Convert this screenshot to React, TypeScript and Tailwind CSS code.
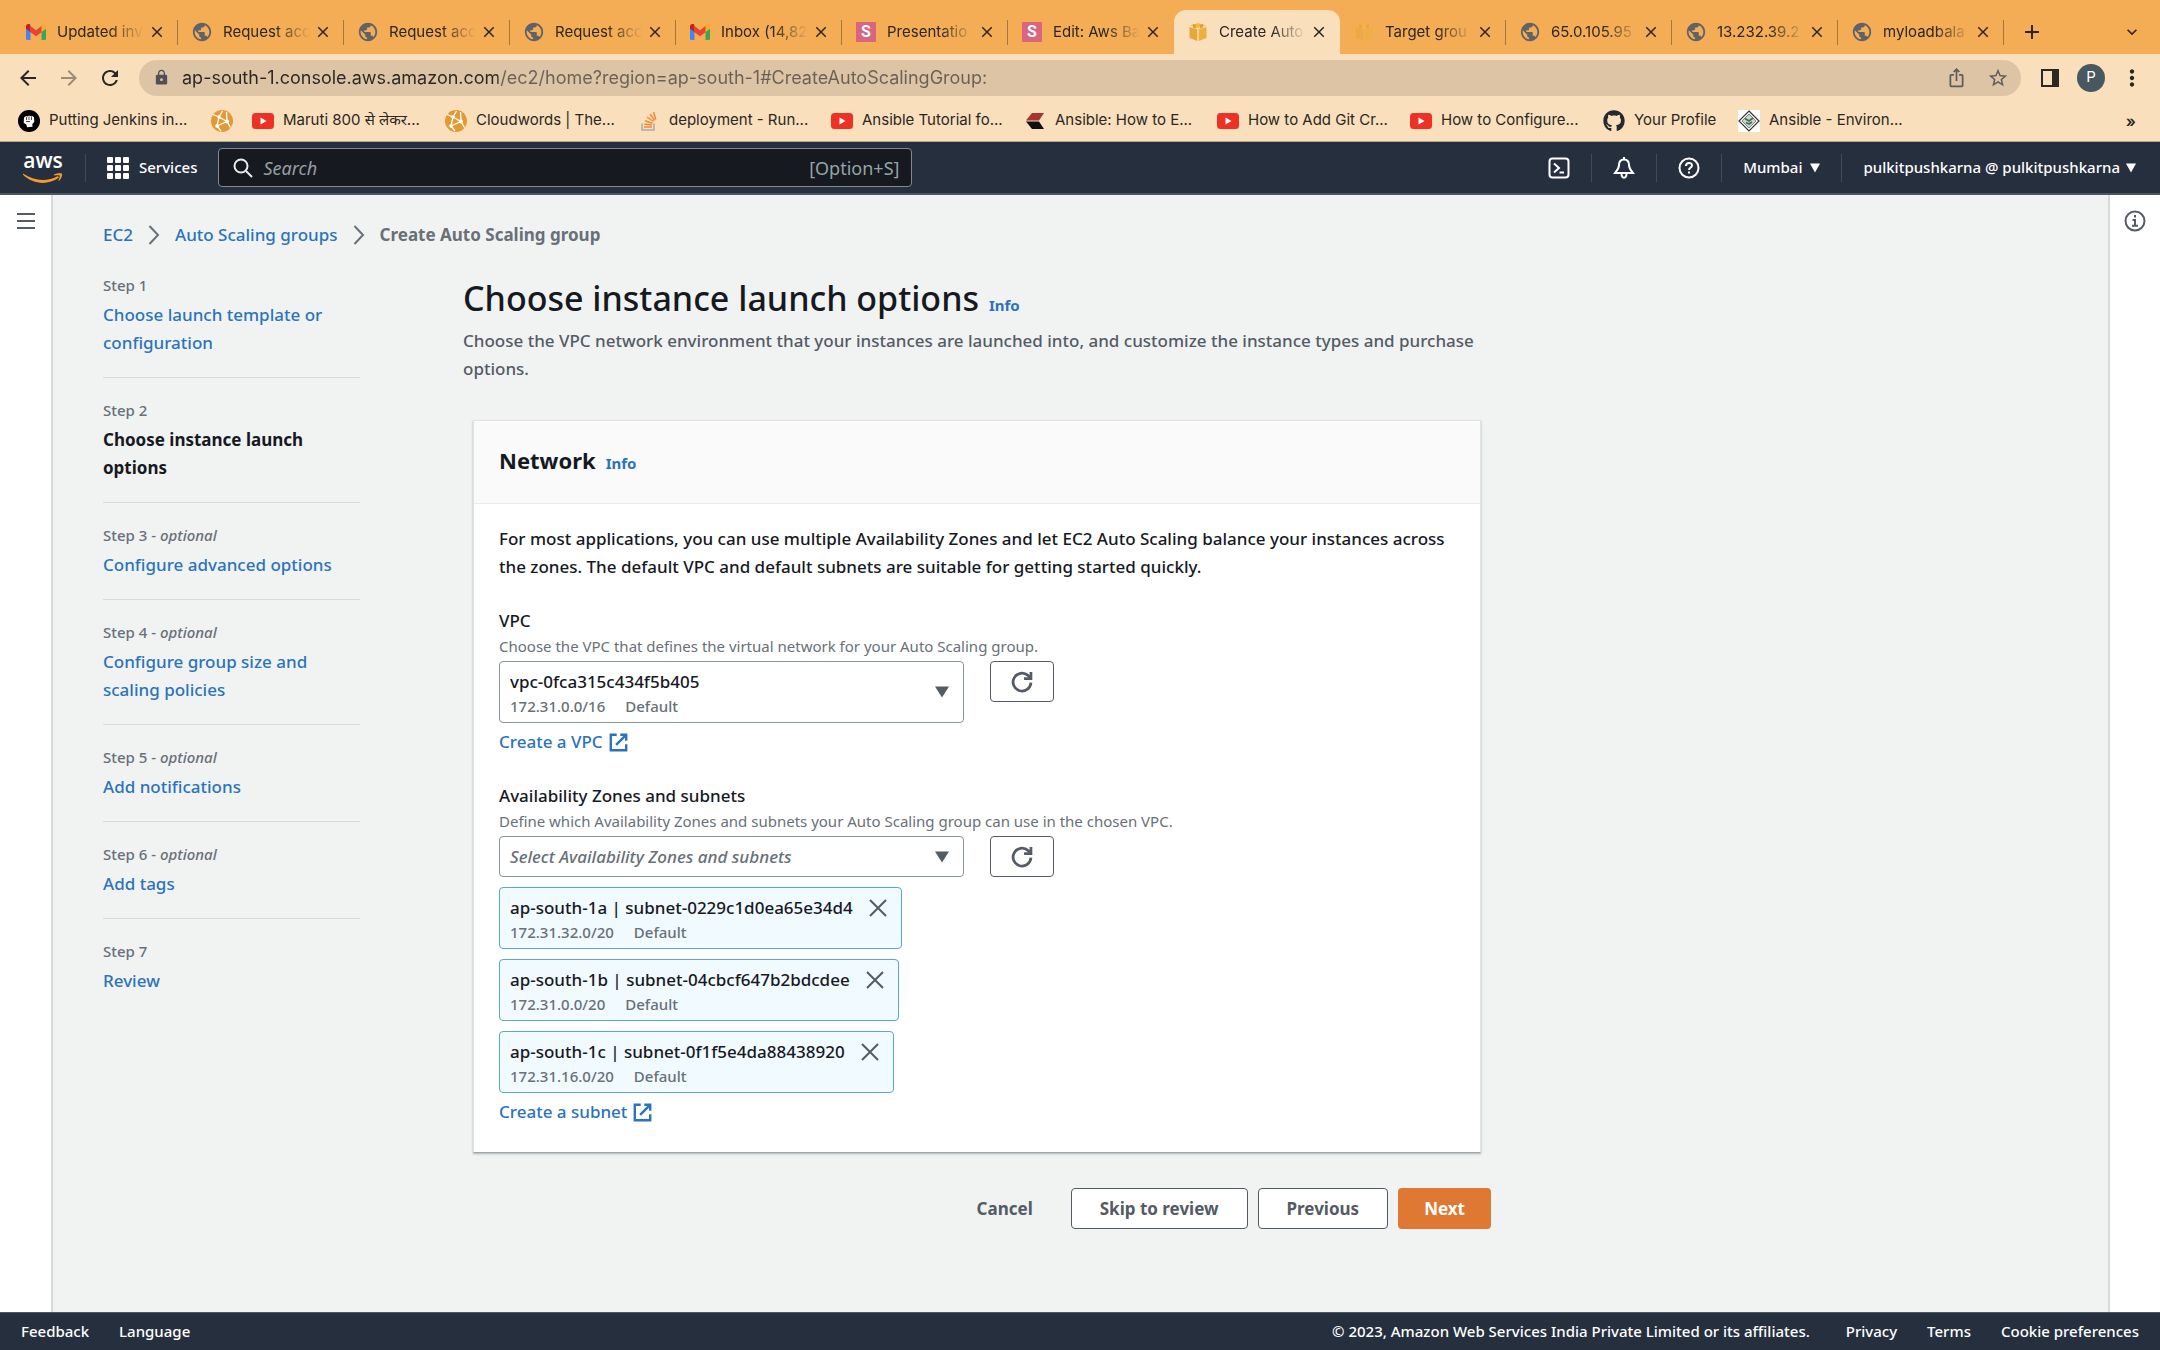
import type { ReactNode } from 'react';
import {
  MdArrowBack,
  MdArrowForward,
  MdClose,
  MdIosShare,
  MdLock,
  MdMoreVert,
  MdPublic,
  MdRefresh,
  MdStarBorder,
  MdAdd,
  MdExpandMore,
} from 'react-icons/md';
import { FaGithub } from 'react-icons/fa';

/* ---------- Icons ---------- */

function GmailIcon() {
  return (
    <svg viewBox="0 0 20 16" className="h-4 w-5">
      <path d="M0 3v11.5A1.5 1.5 0 0 0 1.5 16H4.500V7.200z" fill="#4285F4" />
      <path d="M20 3v11.500a1.500 1.500 0 0 1-1.500 1.500H15.500V7.200z" fill="#34A853" />
      <path d="M15.500 2v6.200L20 4.800V2.500C20 .3 17.500-.8 15.800.5z" fill="#F9AB2D" />
      <path d="M4.500 8.200V2L10 6.200 15.500 2v6.200L10 12.300z" fill="#EA4335" />
      <path d="M0 2.500v2.300l4.500 3.400V2L4.200.5C2.500-.8 0 .3 0 2.500z" fill="#C5221F" />
    </svg>
  );
}

function GlobeIcon() {
  return <MdPublic className="size-[22px] shrink-0 text-[#5f6368]" />;
}

function SlideIcon() {
  return (
    <span className="flex size-5 items-center justify-center bg-[#d9657f] font-['Roboto',sans-serif] text-base font-bold text-white">
      S
    </span>
  );
}

function CubeIcon({ faded = false }: { faded?: boolean }) {
  return (
    <svg viewBox="0 0 20 20" className={faded ? 'size-5 opacity-50' : 'size-5'}>
      <path d="M10 1 18 3.500 10 6 2 3.500z" fill="#F5B83D" />
      <path d="M1.500 5 9.300 7.300V19L1.500 16z" fill="#E5A93A" />
      <path d="M18.500 5 10.700 7.300V19L18.500 16z" fill="#EDB03C" />
      <path d="M5 1.800 8 3v3.500L5 5.500zM15 1.800 12 3v3.500l3-1z" fill="#E09F2F" />
    </svg>
  );
}

function JenkinsIcon() {
  return (
    <svg viewBox="0 0 22 22" className="size-[22px] shrink-0">
      <circle cx="11" cy="11" r="11" fill="#000" />
      <path d="M6 7.500 8 6l1.500.5L11 5.500l1.500.7 1.500-.5 2 1.500.3 4.500-2 2.500.2 2.500-5.500.5-.5-2.500-2.800-2z" fill="#fff" />
      <path d="M8.500 7v3M11 6.500v3.500M13.500 6.500V10M8 11.500h4" stroke="#000" strokeWidth=".7" fill="none" />
    </svg>
  );
}

function CloudwordsIcon() {
  return (
    <svg viewBox="0 0 22 22" className="size-[22px] shrink-0">
      <circle cx="11" cy="11" r="11" fill="#E39A35" />
      <path d="M2 4.500 8 7 16 11.500 15.500 2M8 7 11.500 1M8 7 6 16M16 11.500 6 16 10 21M16 11.500l3.500 6" stroke="#fff" strokeWidth="1.300" fill="none" />
      <circle cx="8" cy="7" r="1.700" fill="#fff" />
      <circle cx="16" cy="11.500" r="2" fill="#fff" />
      <circle cx="6" cy="16" r="1.800" fill="#fff" />
    </svg>
  );
}

function YoutubeIcon() {
  return (
    <svg viewBox="0 0 22 16" className="h-4 w-[22px] shrink-0">
      <rect width="22" height="16" rx="3.500" fill="#ED3124" />
      <path d="M8.500 4.500v7l6-3.500z" fill="#fff" />
    </svg>
  );
}

function StackIcon() {
  return (
    <svg viewBox="0 0 22 22" className="size-[22px] shrink-0" fill="none" strokeWidth="1.500">
      <path d="M4 13.500v6.500h12v-6.500" stroke="#A9AAAB" />
      <path d="M6 17h8M6.200 14l7.900 1M7 10.700l7.500 2.600M9 7l6.500 4.500M12 4l4.700 6.500M15.500 2l2.300 7.500" stroke="#EE8B3A" />
    </svg>
  );
}

function AnsibleHowIcon() {
  return (
    <svg viewBox="0 0 22 22" className="size-[22px] shrink-0">
      <path d="M8 3h12l-5 7.500H2z" fill="#A93232" />
      <path d="M2 11.500h13l5 7.500H8z" fill="#111" />
    </svg>
  );
}

function EnvironIcon() {
  return (
    <svg viewBox="0 0 22 22" className="size-[22px] shrink-0">
      <rect width="22" height="22" fill="#fff" />
      <path d="M11 1 21 11 11 21 1 11z" fill="none" stroke="#333" strokeWidth="1.200" />
      <path d="M11 4 18 11 11 18 4 11z" fill="#C9D6CC" stroke="#666" strokeWidth=".8" />
      <path d="M7 8.500 11 11l4-3M8 12.500l3 1.500 3-2" fill="none" stroke="#467052" strokeWidth="1.800" />
    </svg>
  );
}

function AwsLogo() {
  return (
    <span className="flex w-10 flex-col items-center">
      <span className="font-['Open_Sans',sans-serif] text-[21px] leading-4 font-semibold text-white">aws</span>
      <svg viewBox="0 0 40 11" className="mt-1 h-[11px] w-10" fill="none">
        <path d="M0 1.500c11 7.500 24 8.500 35 2.500l.8 1.800C25 13.500 10 12.500 0 2.800z" fill="#F59B2E" />
        <path d="M31 2.500c3-1.500 7.500-1.500 8-.8.5.8-.5 5-3 7.300-.4.200-.8 0-.5-.5.700-1.800 1.500-4.300 1.200-4.900-.5-.6-3.300-.4-5.300-.2-.6 0-.8-.5-.4-.9z" fill="#F59B2E" />
      </svg>
    </span>
  );
}

function Caret({ className }: { className: string }) {
  return (
    <svg viewBox="0 0 10 10" preserveAspectRatio="none" className={className} fill="currentColor">
      <path d="M0 .5h10L5 9.500z" />
    </svg>
  );
}

function ExternalIcon() {
  return (
    <svg viewBox="0 0 16 16" className="size-[19px]" fill="none" stroke="currentColor" strokeWidth="2">
      <path d="M6.500 1.500H1.500v13h13V9.500M9.500 1.500h5v5M14.200 1.800 6 10" />
    </svg>
  );
}

function ReloadIcon() {
  return (
    <svg viewBox="0 0 16 16" className="size-[22px]" fill="none" stroke="currentColor" strokeWidth="2">
      <path d="M14.500 8.500A6.500 6.500 0 1 1 12.300 3.200L14.500 5" />
      <path d="M14.500 .8V5.500H9.500" />
    </svg>
  );
}

function CrumbArrow() {
  return (
    <svg viewBox="0 0 12 20" className="h-5 w-3 text-[#687078]" fill="none" stroke="currentColor" strokeWidth="2">
      <path d="m1.500 1 8.500 9-8.500 9" />
    </svg>
  );
}

/* ---------- Data ---------- */

const tabs: { title: string; icon: ReactNode; active?: boolean; line?: boolean }[] = [
  { title: 'Updated inv', icon: <GmailIcon />, line: true },
  { title: 'Request acc', icon: <GlobeIcon />, line: true },
  { title: 'Request acc', icon: <GlobeIcon />, line: true },
  { title: 'Request acc', icon: <GlobeIcon />, line: true },
  { title: 'Inbox (14,82', icon: <GmailIcon />, line: true },
  { title: 'Presentatio', icon: <SlideIcon />, line: true },
  { title: 'Edit: Aws Ba', icon: <SlideIcon /> },
  { title: 'Create Auto', icon: <CubeIcon />, active: true },
  { title: 'Target grou', icon: <CubeIcon faded />, line: true },
  { title: '65.0.105.95', icon: <GlobeIcon />, line: true },
  { title: '13.232.39.2', icon: <GlobeIcon />, line: true },
  { title: 'myloadbala', icon: <GlobeIcon />, line: true },
];

const bookmarks: { title?: string; icon: ReactNode; short?: boolean }[] = [
  { title: 'Putting Jenkins in...', icon: <JenkinsIcon /> },
  { icon: <CloudwordsIcon /> },
  { title: 'Maruti 800 से लेकर...', icon: <YoutubeIcon /> },
  { title: 'Cloudwords | The...', icon: <CloudwordsIcon /> },
  { title: 'deployment - Run...', icon: <StackIcon /> },
  { title: 'Ansible Tutorial fo...', icon: <YoutubeIcon /> },
  { title: 'Ansible: How to E...', icon: <AnsibleHowIcon /> },
  { title: 'How to Add Git Cr...', icon: <YoutubeIcon /> },
  { title: 'How to Configure...', icon: <YoutubeIcon /> },
  { title: 'Your Profile', icon: <FaGithub className="size-[22px] shrink-0 text-[#24292f]" />, short: true },
  { title: 'Ansible - Environ...', icon: <EnvironIcon /> },
];

const steps = [
  { title: 'Choose launch template or configuration', optional: false },
  { title: 'Choose instance launch options', optional: false, current: true },
  { title: 'Configure advanced options', optional: true },
  { title: 'Configure group size and scaling policies', optional: true },
  { title: 'Add notifications', optional: true },
  { title: 'Add tags', optional: true },
  { title: 'Review', optional: false },
];

const subnets = [
  { name: 'ap-south-1a | subnet-0229c1d0ea65e34d4', cidr: '172.31.32.0/20' },
  { name: 'ap-south-1b | subnet-04cbcf647b2bdcdee', cidr: '172.31.0.0/20' },
  { name: 'ap-south-1c | subnet-0f1f5e4da88438920', cidr: '172.31.16.0/20' },
];

/* ---------- Browser ---------- */

function BrowserChrome() {
  return (
    <div className="bg-[#f9dfbc] font-['Inter','Noto_Sans',sans-serif] font-normal text-[#2a2724]">
      {/* Tabs */}
      <div className="flex h-[54px] items-end bg-[#f4ad55] pl-3">
        {tabs.map((tab, i) => (
          <div
            key={i}
            className={
              tab.active
                ? 'flex h-11 w-[166px] shrink-0 items-center rounded-t-xl bg-[#f9dfbc] pl-[14px]'
                : 'flex h-11 w-[166px] shrink-0 items-center pl-[14px]'
            }
          >
            <span className="flex w-5 shrink-0 justify-center">{tab.icon}</span>
            <span className="ml-[11px] w-[87px] text-[15px] whitespace-nowrap [mask-image:linear-gradient(to_right,black_60%,transparent)]">
              {tab.title}
            </span>
            <button aria-label="Close tab" className="ml-1 flex size-[18px] items-center justify-center">
              <MdClose className="size-[18px] stroke-current" />
            </button>
            {tab.line && <span className="ml-auto h-[25px] w-px bg-[#a37840]" />}
          </div>
        ))}
        <button aria-label="New tab" className="ml-3 flex h-11 w-8 items-center justify-center">
          <MdAdd className="size-6" />
        </button>
        <button aria-label="Search tabs" className="mr-4 ml-auto flex h-11 w-6 items-center justify-center">
          <MdExpandMore className="size-5 stroke-current" />
        </button>
      </div>

      {/* Address bar */}
      <div className="flex h-[46px] items-center pt-px pr-[15px] pl-4">
        <button aria-label="Back" className="mr-[17px]">
          <MdArrowBack className="size-6" />
        </button>
        <button aria-label="Forward" className="mr-[17px] text-[#9d8c76]">
          <MdArrowForward className="size-6" />
        </button>
        <button aria-label="Reload" className="mr-[17px]">
          <MdRefresh className="size-6" />
        </button>
        <div className="flex h-9 flex-1 items-center rounded-full bg-[#dcc4a5] pr-3 pl-[14px]">
          <MdLock className="size-[17px] text-[#4d5156]" />
          <input
            aria-label="Address"
            defaultValue="ap-south-1.console.aws.amazon.com/ec2/home?region=ap-south-1#CreateAutoScalingGroup:"
            className="ml-3 flex-1 bg-[linear-gradient(to_right,#2a2724_316px,#6a6056_316px)] bg-clip-text text-lg text-transparent outline-none"
          />
          <button aria-label="Share" className="mr-5 text-[#5f5b57]">
            <MdIosShare className="size-[21px]" />
          </button>
          <button aria-label="Bookmark" className="text-[#5f5b57]">
            <MdStarBorder className="size-[22px]" />
          </button>
        </div>
        <button aria-label="Side panel" className="ml-5">
          <svg viewBox="0 0 18 18" className="size-[18px]">
            <path d="M0 0h18v18H0zM2 2v14h9V2z" fill="currentColor" fillRule="evenodd" />
          </svg>
        </button>
        <button className="ml-[18px] size-7 rounded-full bg-[#475861] text-[15px] text-white">P</button>
        <button aria-label="Menu" className="ml-[14px]">
          <MdMoreVert className="size-[26px]" />
        </button>
      </div>

      {/* Bookmarks */}
      <div className="flex h-[42px] items-center gap-5 border-b border-[#b8a88c] pr-6 pl-[18px]">
        {bookmarks.map((mark, i) => (
          <a key={i} href="#" className="flex items-center gap-[10px] text-[15px] whitespace-nowrap">
            <span className="flex w-[21px] shrink-0 justify-center">{mark.icon}</span>
            {mark.title && <span className={mark.short ? 'w-[84px]' : 'w-[142px]'}>{mark.title}</span>}
          </a>
        ))}
        <button aria-label="More bookmarks" className="ml-auto text-base font-semibold">
          »
        </button>
      </div>
    </div>
  );
}

/* ---------- Console ---------- */

function NavLine() {
  return <span className="h-7 w-px bg-[#414b58]" />;
}

function ConsoleHeader() {
  return (
    <header className="flex h-[53px] items-center border-b-2 border-[#4b5563] bg-[#262f3e] pr-6 pl-[23px] text-[15px] text-white">
      <AwsLogo />
      <span className="ml-[22px] h-7 w-px bg-[#414b58]" />
      <button className="ml-[21px] flex items-center gap-[10px]">
        <svg viewBox="0 0 22 22" className="size-[22px]" fill="currentColor">
          {[0, 8, 16].map((y) => [0, 8, 16].map((x) => <rect key={`${x}-${y}`} x={x} y={y} width="6" height="6" rx="1" />))}
        </svg>
        Services
      </button>
      <label className="ml-[21px] flex h-[39px] w-[694px] items-center rounded-sm border border-[#7f8b8c] bg-[#16191f] pr-3 pl-[14px] font-normal">
        <svg viewBox="0 0 20 20" className="size-5" fill="none" stroke="#eaeded" strokeWidth="2">
          <circle cx="8" cy="8" r="6.500" />
          <path d="m13 13 6 6" />
        </svg>
        <input
          aria-label="Search"
          placeholder="Search"
          className="ml-[10px] flex-1 bg-transparent text-lg outline-none placeholder:text-[#95a0a0] placeholder:italic"
        />
        <span className="text-lg text-[#95a5a6]">[Option+S]</span>
      </label>

      <div className="ml-auto flex items-center gap-[21px]">
        <button aria-label="CloudShell">
          <svg viewBox="0 0 22 22" className="size-[22px]" fill="none" stroke="currentColor" strokeWidth="2">
            <rect x="1.500" y="1.500" width="19" height="19" rx="3" />
            <path d="m6 6.500 5 4.500-5 4.500M11.500 15.500H16" />
          </svg>
        </button>
        <NavLine />
        <button aria-label="Notifications">
          <svg viewBox="0 0 22 22" className="size-[22px]" fill="none" stroke="currentColor" strokeWidth="2">
            <path d="M11 2.500c-3.500 0-5 2.500-5 5.500 0 3.500-2 5.500-4 8h18c-2-2.500-4-4.500-4-8 0-3-1.500-5.500-5-5.500zM11 0v3M8.500 16.500c0 5.500 5 5.500 5 0" />
          </svg>
        </button>
        <NavLine />
        <button aria-label="Help">
          <svg viewBox="0 0 22 22" className="size-[22px]" fill="none" stroke="currentColor" strokeWidth="2">
            <circle cx="11" cy="11" r="9.500" />
            <path d="M8 9c0-4 6-4 6-.5 0 2-3 2-3 4.500M11 14.500v2" />
          </svg>
        </button>
        <NavLine />
        <button className="flex items-center gap-2">
          Mumbai
          <Caret className="size-[10px]" />
        </button>
        <NavLine />
        <button className="flex items-center gap-[6px]">
          pulkitpushkarna @ pulkitpushkarna
          <Caret className="size-[10px]" />
        </button>
      </div>
    </header>
  );
}

function StepList() {
  return (
    <ol className="w-[257px] shrink-0">
      {steps.map((step, i) => (
        <li key={step.title} className="mb-[21px] border-b border-[#d5dbdb] pb-5 last:border-0">
          <p className="text-[15px] leading-[22px] text-[#687078]">
            Step {i + 1}
            {step.optional && (
              <>
                {' - '}
                <i>optional</i>
              </>
            )}
          </p>
          {step.current ? (
            <p className="mt-[5px] pr-5 leading-7 font-bold">{step.title}</p>
          ) : (
            <a href="#" className="mt-[5px] block pr-5 leading-7 text-[#2b73bb]">
              {step.title}
            </a>
          )}
        </li>
      ))}
    </ol>
  );
}

function RefreshButton({ label }: { label: string }) {
  return (
    <button
      aria-label={label}
      className="flex h-[41px] w-16 items-center justify-center rounded-sm border border-[#545b64] bg-white text-[#545b64]"
    >
      <ReloadIcon />
    </button>
  );
}

function NetworkPanel() {
  return (
    <section className="mx-[10px] mt-[37px] border border-[#dfe3e3] border-b-[#9ba7a8] bg-white shadow-[0_1px_2px_rgba(0,28,36,0.3)]">
      <div className="flex h-[83px] items-center border-b border-[#eaeded] bg-[#fafafa] px-[25px] pb-1">
        <div className="flex items-baseline gap-[10px]">
          <h2 className="text-[22px] font-bold">Network</h2>
          <a href="#" className="text-[15px] font-bold text-[#2b73bb]">
            Info
          </a>
        </div>
      </div>

      <div className="px-[25px] pt-[21px] pb-[26px]">
        <p className="leading-7">
          For most applications, you can use multiple Availability Zones and let EC2 Auto Scaling balance your instances
          across the zones. The default VPC and default subnets are suitable for getting started quickly.
        </p>

        {/* VPC */}
        <label htmlFor="vpc" className="mt-[26px] block leading-7">
          VPC
        </label>
        <p className="pb-1 text-[15px] leading-[22px] font-normal text-[#687078]">
          Choose the VPC that defines the virtual network for your Auto Scaling group.
        </p>
        <div className="flex items-start gap-[26px]">
          <div className="relative w-[465px]">
            <select
              id="vpc"
              className="block h-[62px] w-full appearance-none rounded-sm border border-[#879596] bg-white pb-5 pl-[10px] outline-none"
            >
              <option>vpc-0fca315c434f5b405</option>
            </select>
            <span className="pointer-events-none absolute bottom-[6px] left-[11px] flex gap-5 text-[15px] leading-[22px] text-[#687078]">
              <span>172.31.0.0/16</span>
              <span>Default</span>
            </span>
            <Caret className="pointer-events-none absolute top-[25px] right-[15px] h-3 w-[14px] text-[#545b64]" />
          </div>
          <RefreshButton label="Refresh VPCs" />
        </div>
        <a href="#" className="mt-[5px] flex items-center gap-[6px] leading-7 text-[#2b73bb]">
          Create a VPC
          <ExternalIcon />
        </a>

        {/* Subnets */}
        <label htmlFor="subnets" className="mt-[26px] block leading-7">
          Availability Zones and subnets
        </label>
        <p className="pb-1 text-[15px] leading-[22px] font-normal text-[#687078]">
          Define which Availability Zones and subnets your Auto Scaling group can use in the chosen VPC.
        </p>
        <div className="flex items-start gap-[26px]">
          <div className="relative w-[465px]">
            <select
              id="subnets"
              className="block h-[41px] w-full appearance-none rounded-sm border border-[#879596] bg-white pl-[10px] text-[#687078] italic outline-none"
            >
              <option>Select Availability Zones and subnets</option>
            </select>
            <Caret className="pointer-events-none absolute top-[15px] right-[15px] h-3 w-[14px] text-[#545b64]" />
          </div>
          <RefreshButton label="Refresh subnets" />
        </div>
        <ul className="mt-[10px] flex flex-col items-start gap-[10px]">
          {subnets.map((subnet) => (
            <li
              key={subnet.name}
              className="flex h-[62px] items-start gap-4 rounded-sm border border-[#5ba9cf] bg-[#f1faff] py-[6px] pr-[14px] pl-[10px]"
            >
              <div>
                <p className="leading-7">{subnet.name}</p>
                <p className="flex gap-5 text-[15px] leading-5 text-[#687078]">
                  <span>{subnet.cidr}</span>
                  <span>Default</span>
                </p>
              </div>
              <button aria-label="Remove subnet" className="flex h-7 items-center text-[#545b64]">
                <svg viewBox="0 0 18 18" className="size-[18px]" fill="none" stroke="currentColor" strokeWidth="2">
                  <path d="m1 1 16 16M17 1 1 17" />
                </svg>
              </button>
            </li>
          ))}
        </ul>
        <a href="#" className="mt-[5px] flex items-center gap-[6px] leading-7 text-[#2b73bb]">
          Create a subnet
          <ExternalIcon />
        </a>
      </div>
    </section>
  );
}

export default function App() {
  return (
    <div className="flex min-h-screen flex-col font-['Noto_Sans',sans-serif] text-[17px] font-medium text-[#16191f]">
      <BrowserChrome />
      <ConsoleHeader />

      <div className="flex flex-1 bg-[#f1f3f3]">
        <aside className="w-[53px] shrink-0 border-r-2 border-[#d5dbdb] bg-white pt-[18px] pl-[17px]">
          <button aria-label="Open navigation" className="block">
            <svg viewBox="0 0 18 16" className="h-4 w-[18px]" stroke="#545b64" strokeWidth="2">
              <path d="M0 1h18M0 8h18M0 15h18" />
            </svg>
          </button>
        </aside>

        <main className="flex-1 px-[50px] pt-[26px]">
          <nav aria-label="Breadcrumb" className="flex items-center gap-[15px] leading-7">
            <a href="#" className="text-[#2b73bb]">
              EC2
            </a>
            <CrumbArrow />
            <a href="#" className="text-[#2b73bb]">
              Auto Scaling groups
            </a>
            <CrumbArrow />
            <span className="font-bold text-[#687078]">Create Auto Scaling group</span>
          </nav>

          <div className="mt-[25px] flex gap-[103px]">
            <StepList />
            <div className="max-w-[1028px] flex-1">
              <div className="flex items-baseline gap-[10px]">
                <h1 className="text-[34px] leading-[49px]">Choose instance launch options</h1>
                <a href="#" className="text-[15px] font-bold text-[#2b73bb]">
                  Info
                </a>
              </div>
              <p className="mt-1 leading-7 text-[#545b64]">
                Choose the VPC network environment that your instances are launched into, and customize the instance
                types and purchase options.
              </p>

              <NetworkPanel />

              <div className="mt-[35px] flex justify-end gap-[10px] font-bold text-[#545b64]">
                <button className="h-[41px] px-7">Cancel</button>
                <button className="h-[41px] rounded-sm border border-[#545b64] bg-white px-7">Skip to review</button>
                <button className="h-[41px] rounded-sm border border-[#545b64] bg-white px-7">Previous</button>
                <button className="h-[41px] rounded-sm bg-[#df7832] px-[26px] text-white">Next</button>
              </div>
            </div>
          </div>
        </main>

        <aside className="w-[52px] shrink-0 border-l-2 border-[#d5dbdb] bg-white pt-[15px] pl-[14px]">
          <button aria-label="Open info panel" className="block">
            <svg viewBox="0 0 22 22" className="size-[22px]" fill="none" stroke="#545b64" strokeWidth="2">
              <circle cx="11" cy="11" r="9.500" />
              <path d="M11 5v2.500M8.500 10H11v5.500M8 15.800h6" />
            </svg>
          </button>
        </aside>
      </div>

      <footer className="flex h-[38px] items-center border-t border-[#4b5563] bg-[#262f3e] px-[21px] text-[15px] text-white">
        <a href="#">Feedback</a>
        <a href="#" className="ml-[30px]">
          Language
        </a>
        <span className="ml-auto">© 2023, Amazon Web Services India Private Limited or its affiliates.</span>
        <a href="#" className="ml-9">
          Privacy
        </a>
        <a href="#" className="ml-[30px]">
          Terms
        </a>
        <a href="#" className="ml-[30px]">
          Cookie preferences
        </a>
      </footer>
    </div>
  );
}
